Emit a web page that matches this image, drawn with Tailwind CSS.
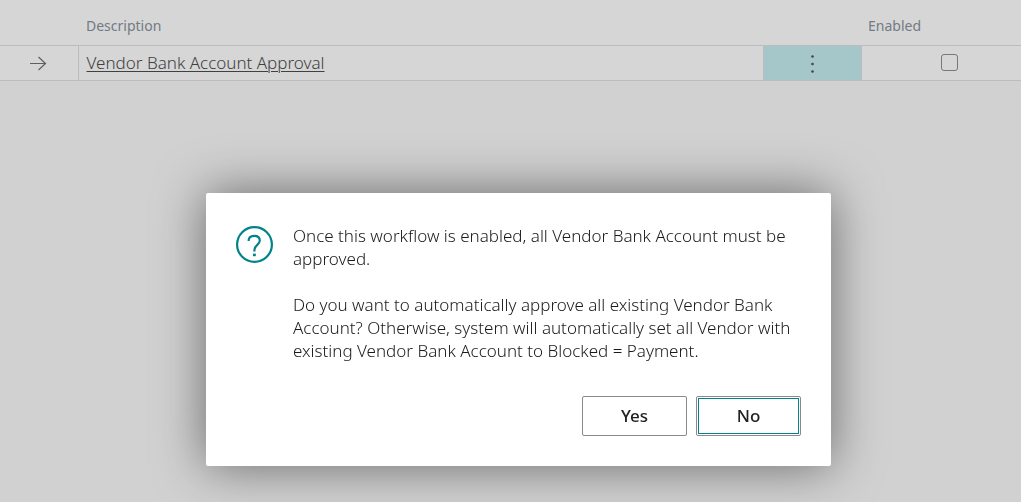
<!DOCTYPE html>
<html lang="en">
<head>
<meta charset="utf-8">
<meta name="viewport" content="width=device-width, initial-scale=1">
<title>Workflows</title>
<script src="https://cdn.jsdelivr.net/npm/@tailwindcss/browser@4"></script>
</head>
<body class="min-h-screen overflow-hidden bg-[#d1d1d1] font-['Segoe_UI','Noto_Sans',sans-serif] text-[#404040]">
<main>
  <table class="w-full table-fixed border-collapse bg-[#d6d6d6]">
    <colgroup><col class="w-[78px]"><col><col class="w-[98px]"><col class="w-[160px]"></colgroup>
    <thead>
      <tr class="h-[45px] border-b border-[#bcbcc0] text-left text-sm text-[#737a85]">
        <td></td>
        <th scope="col" class="px-2 pt-2 font-normal">Description</th>
        <td></td>
        <th scope="col" class="px-[7px] pt-2 font-normal">Enabled</th>
      </tr>
    </thead>
    <tbody>
      <tr class="h-[35px] border-b border-[#bcbcc0]">
        <td class="border-r border-[#bcbcc0] pr-0.5">
          <svg class="mx-auto h-4 w-[18px]" viewBox="0 0 18 16" fill="none" stroke="#606060" stroke-width="1.2" aria-hidden="true"><path d="M1 8.5H16.5M9.5 2L16.5 8.5L9.5 15"/></svg>
        </td>
        <td class="px-2"><a href="#" class="block text-[17px] leading-6 font-light underline decoration-1 underline-offset-2">Vendor Bank Account Approval</a></td>
        <td class="border-x border-[#bcbcc0] bg-[#a6c7c9] p-0">
          <button type="button" aria-label="Show more options" class="flex h-[34px] w-full items-center justify-center">
            <svg class="mt-0.5 h-5 w-1" viewBox="0 0 4 20" fill="#454545"><circle cx="2.5" cy="2.5" r="1.3"/><circle cx="2.5" cy="10" r="1.3"/><circle cx="2.5" cy="17.5" r="1.3"/></svg>
          </button>
        </td>
        <td class="pl-4 text-center"><input type="checkbox" aria-label="Enabled" class="mx-auto block size-[17px] appearance-none rounded-[3px] border border-[#777777]"></td>
      </tr>
    </tbody>
  </table>
</main>

<div class="fixed inset-0 flex items-start justify-center pt-[193px] pl-4">
  <div role="alertdialog" aria-modal="true" aria-describedby="message" class="w-full max-w-[625px] rounded-xs bg-white px-[30px] pt-[31px] pb-[30px] shadow-[0_0_50px_rgba(0,0,0,0.5)]">
    <div class="flex gap-5">
      <svg class="mt-0.5 size-[37px] shrink-0" viewBox="0 0 37 37" fill="none" stroke="#00838a" stroke-width="2.2" aria-hidden="true">
        <circle cx="18.5" cy="18.5" r="17.4"/>
        <path d="M12.6 15C12.6 11.5 14.8 9.8 18.2 9.8C21.6 9.8 23.8 11.7 23.8 14.6C23.8 18.8 18.4 19.1 18.4 24V25.4"/>
        <path d="M17 28.9H19.8" stroke-width="2.6"/>
      </svg>
      <div id="message" class="flex flex-col gap-[23px] text-[17px] leading-[23px] font-light text-[#1a1a1a]">
        <p>Once this workflow is enabled, all Vendor Bank Account must be<br>approved.</p>
        <p>Do you want to automatically approve all existing Vendor Bank<br>Account? Otherwise, system will automatically set all Vendor with<br>existing Vendor Bank Account to Blocked = Payment.</p>
      </div>
    </div>
    <div class="mt-[34px] flex justify-end gap-[9px] text-[17px] font-medium text-[#212121]">
      <button type="button" class="h-10 w-[105px] rounded-xs border border-[#8a8a8a]">Yes</button>
      <button type="button" class="h-10 w-[105px] rounded-xs border border-[#8a8a8a] outline outline-[#00838a] -outline-offset-3">No</button>
    </div>
  </div>
</div>
</body>
</html>
